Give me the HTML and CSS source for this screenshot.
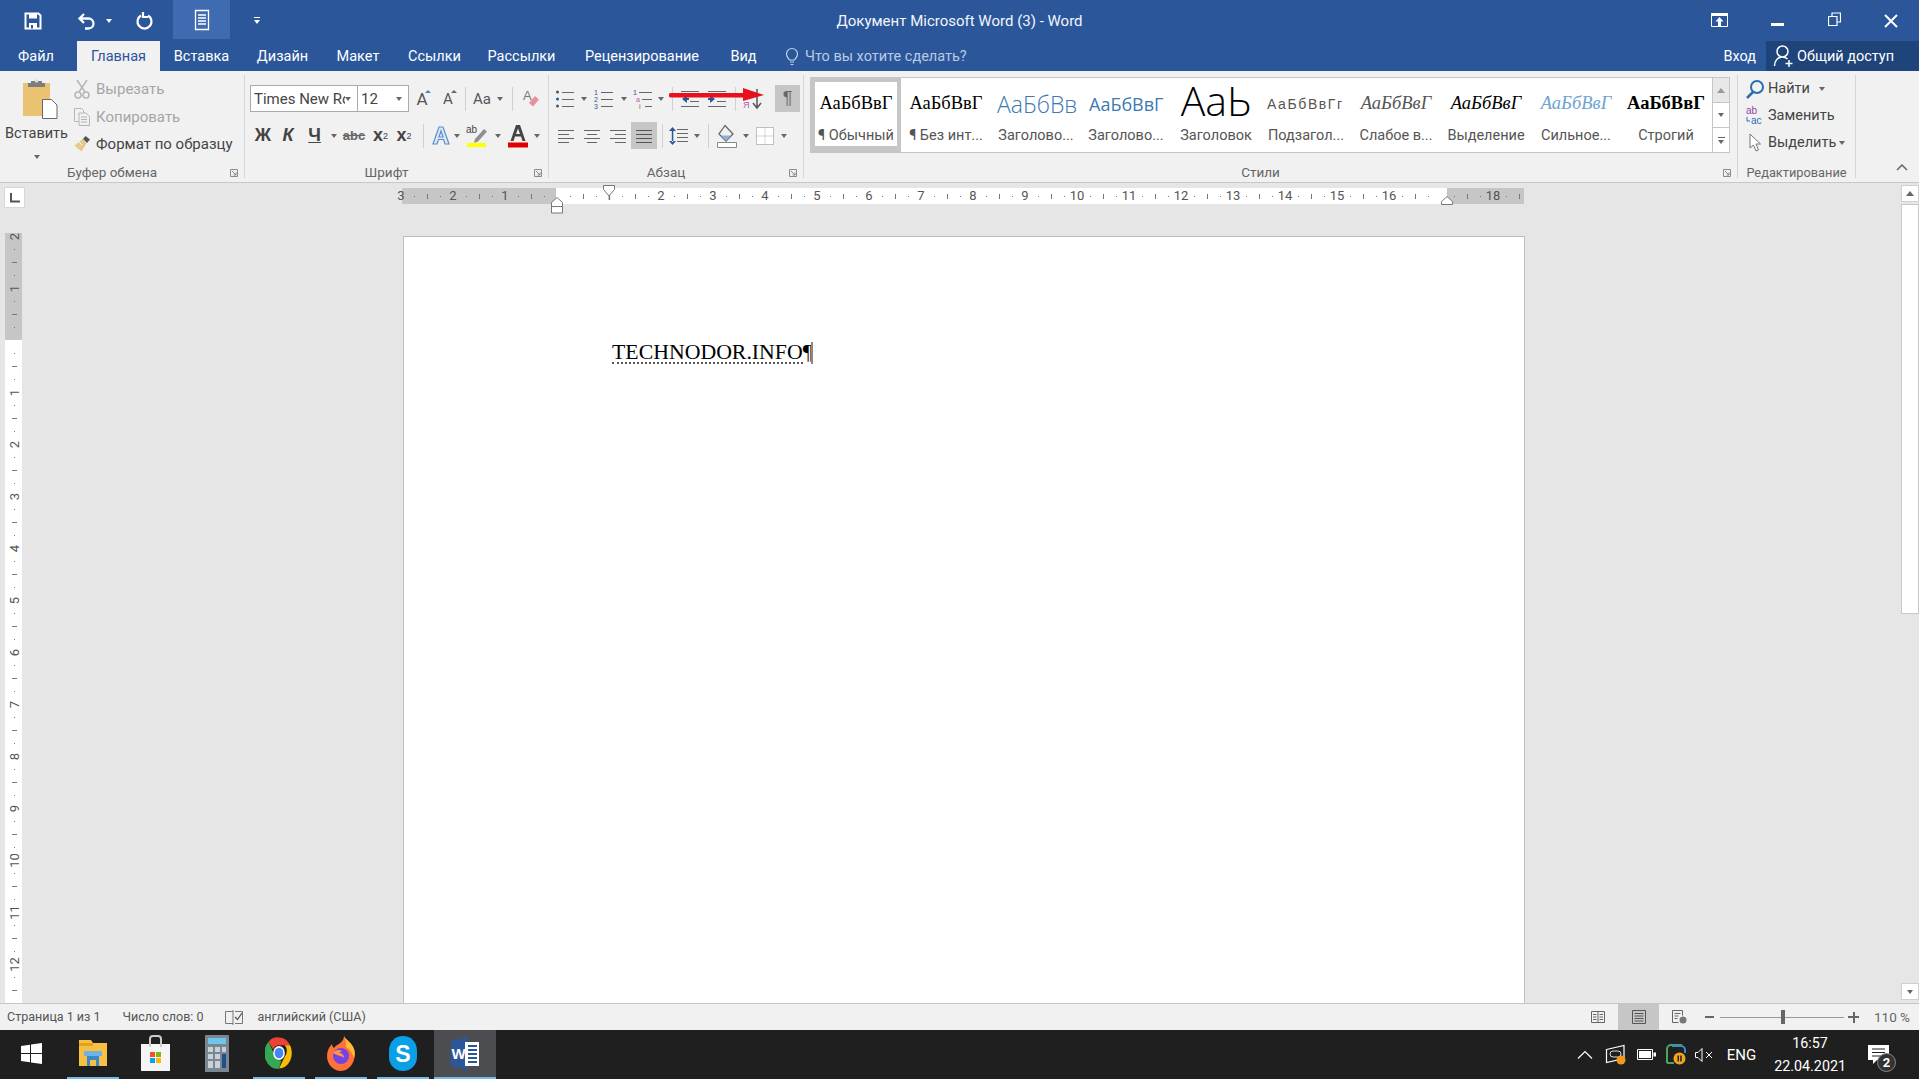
FILE: index.html
```html
<!DOCTYPE html>
<html lang="ru">
<head>
<meta charset="utf-8">
<title>Документ Microsoft Word (3) - Word</title>
<link rel="stylesheet" href="styles.css">
</head>
<body>
<div class="app">
  <header class="titlebar">
    <div class="qat">
      <svg class="qat-save" width="20" height="20" viewBox="0 0 20 20"><path d="M2.500 2.500h13l2 2v13h-15z" fill="none" stroke="#fff" stroke-width="2"/><path d="M6 2.500h8v5H6zM6 12h8v5.500H6z" fill="#fff"/><path d="M8 14h2v3.500H8z" fill="#2b579a"/></svg>
      <svg class="qat-undo" width="20" height="20" viewBox="0 0 20 20"><path d="M7 3L2.500 7.500 7 12M3 7.500h8.500a4.500 4.500 0 0 1 0 10H8" fill="none" stroke="#fff" stroke-width="2.300"/></svg>
      <i class="caret caret-w qat-caret"></i>
      <svg class="qat-redo" width="20" height="20" viewBox="0 0 20 20"><path d="M7 4.500A7 7 0 1 0 14 4.500M9 1v5H14" fill="none" stroke="#fff" stroke-width="2.200"/></svg>
      <div class="qat-active"><svg width="16" height="22" viewBox="0 0 16 22"><path d="M1.500 1.500h13v19h-13zM4 6h8M4 9h8M4 12h8M4 15h8" fill="none" stroke="#fff" stroke-width="1.300"/></svg></div>
      <svg class="qat-more" width="8" height="10" viewBox="0 0 8 10"><path d="M1 1h6v1H1zM1 4h6L4 8z" fill="#fff"/></svg>
    </div>
    <div class="doc-title">Документ Microsoft Word (3) - Word</div>
    <div class="winctl">
      <svg class="wc-ribbon" width="18" height="15" viewBox="0 0 18 15"><path d="M.500.500h16v13H.5z" fill="none" stroke="#fff"/><path d="M0 0h17v3H0zM8.500 4l4 4.500H10V13H7V8.500H4.500z" fill="#fff"/></svg>
      <svg class="wc-min" width="13" height="4" viewBox="0 0 13 4"><path d="M0 0h13v3H0z" fill="#fff"/></svg>
      <svg class="wc-max" width="13" height="15" viewBox="0 0 13 15"><path d="M.500 4.500h8.500v9H.500zM4 4V1h8.500v9H9.500" fill="none" stroke="#fff" stroke-width="1.200"/></svg>
      <svg class="wc-close" width="14" height="14" viewBox="0 0 14 14"><path d="M1 1l12 12M13 1L1 13" stroke="#fff" stroke-width="2"/></svg>
    </div>
  </header>

  <nav class="tabs">
    <a class="tab tab-file">Файл</a>
    <a class="tab tab-on">Главная</a>
    <a class="tab">Вставка</a>
    <a class="tab">Дизайн</a>
    <a class="tab">Макет</a>
    <a class="tab">Ссылки</a>
    <a class="tab">Рассылки</a>
    <a class="tab">Рецензирование</a>
    <a class="tab">Вид</a>
    <div class="tellme">
      <svg width="14" height="19" viewBox="0 0 14 19"><path d="M4.500 13C3 11 1.500 9.500 1.500 7a5.500 5.500 0 0 1 11 0c0 2.500-1.500 4-3 6zM5 15h4M5.500 17.500h3" fill="none" stroke="#c4d3e8" stroke-width="1.200"/></svg>
      <span>Что вы хотите сделать?</span>
    </div>
    <a class="signin">Вход</a>
    <a class="share">
      <svg width="22" height="24" viewBox="0 0 22 24"><path d="M9.500 2a5 5 0 0 1 0 11 5 5 0 0 1 0-11zM1.500 22c0-5 3-9 8-9 2 0 3.500.500 5 2M16 16v7M12.500 19.500h7" fill="none" stroke="#fff" stroke-width="1.500"/></svg>
      <span>Общий доступ</span>
    </a>
  </nav>

  <section class="ribbon">
    <div class="group g-clip">
      <div class="group-body clip-body">
        <div class="paste">
          <svg width="36" height="40" viewBox="0 0 36 40"><path d="M1 4h27v33H1z" fill="#e9c372"/><path d="M9 2h11v2h3v4H6V4h3z" fill="#7d7d7d"/><path d="M13 .500h3v3h-3z" fill="#dcdcdc"/><path d="M20.500 20.500h9l5.500 5.500v13.500H20.500z" fill="#fff" stroke="#666"/></svg>
          <span>Вставить</span>
          <i class="caret paste-caret"></i>
        </div>
        <div class="clip-cmds">
          <div class="cmd off"><svg width="18" height="20" viewBox="0 0 18 20"><path d="M4 1l8 12M14 1L6 13" stroke="#b5b5b5" stroke-width="1.500"/><circle cx="5" cy="16" r="3" fill="none" stroke="#b5b5b5" stroke-width="1.500"/><circle cx="13" cy="16" r="3" fill="none" stroke="#b5b5b5" stroke-width="1.500"/></svg><span>Вырезать</span></div>
          <div class="cmd off"><svg width="18" height="20" viewBox="0 0 18 20"><path d="M1.500 1.500h7l2 2v2M1.500 1.500v13h4M6 6h7l3.500 3.500v9H6zM8 10h6M8 12.500h6M8 15h6" fill="none" stroke="#b5b5b5"/></svg><span>Копировать</span></div>
          <div class="cmd"><svg width="18" height="18" viewBox="0 0 18 18"><path d="M12.500 1l4.500 3.500-3 3.500-4-4z" fill="#555"/><path d="M9.500 4l4 4.500-5 8-7-6z" fill="#e6c98a"/><path d="M6 7l3 3" stroke="#fff"/></svg><span>Формат по образцу</span></div>
        </div>
      </div>
      <div class="group-label">Буфер обмена</div>
      <svg class="launcher" width="8" height="8" viewBox="0 0 8 8"><path d="M.500.500h7v7h-7zM2 2l4 4M6 3.500V6H3.500" fill="none" stroke="#8a8a8a"/></svg>
    </div>

    <div class="group g-font">
      <div class="group-body rows">
        <div class="row font-r1">
          <div class="combo font-name"><span>Times New Ro</span><i class="caret"></i></div>
          <div class="combo font-size"><span>12</span><i class="caret"></i></div>
          <div class="cell"><b class="glyph-a">A</b><i class="up up-blue"></i></div>
          <div class="cell"><b class="glyph-a glyph-a-s">A</b><i class="up"></i></div>
          <div class="cell"><i class="vsep"></i></div>
          <div class="cell glyph-aa">Aa</div>
          <div class="cell"><i class="caret"></i></div>
          <div class="cell"><i class="vsep"></i></div>
          <div class="cell"><svg width="18" height="22" viewBox="0 0 18 22"><text x="1" y="12" class="svgt" font-size="13" fill="#777">A</text><path d="M7 15l6-7 4 3.500-6 7z" fill="#ea8f9c"/></svg></div>
        </div>
        <div class="row font-r2">
          <div class="cell fmt fmt-b">Ж</div>
          <div class="cell fmt fmt-i">К</div>
          <div class="cell fmt fmt-u">Ч</div>
          <div class="cell"><i class="caret"></i></div>
          <div class="cell fmt-s">abc</div>
          <div class="cell fmt-x">x<sub>2</sub></div>
          <div class="cell fmt-x">x<sup>2</sup></div>
          <div class="cell"><i class="vsep"></i></div>
          <div class="cell"><svg width="20" height="22" viewBox="0 0 20 22"><path d="M8 2h4l6 17h-4l-1.500-4.500h-5L6 19H2zM10 6l-2 6h4z" fill="#dbe8f6" fill-rule="evenodd" stroke="#5b8fc9" stroke-width="1.200"/></svg></div>
          <div class="cell"><i class="caret"></i></div>
          <div class="cell"><svg width="22" height="24" viewBox="0 0 22 24"><text x="0" y="9" class="svgt" font-size="10" fill="#444">ab</text><path d="M9 15l9-10 3 2.500-9 10-4 1.500z" fill="#8f8f8f"/><path d="M1 19h19v4H1z" fill="#ffff00"/></svg></div>
          <div class="cell"><i class="caret"></i></div>
          <div class="cell"><svg width="20" height="24" viewBox="0 0 20 24"><path d="M8 1h4l5.500 16h-3L13 12.500H7L5.500 17h-3zM10 4.500L8 10h4z" fill="#444" fill-rule="evenodd"/><path d="M0 18.500h20v5H0z" fill="#e00000"/></svg></div>
          <div class="cell"><i class="caret"></i></div>
        </div>
      </div>
      <div class="group-label">Шрифт</div>
      <svg class="launcher" width="8" height="8" viewBox="0 0 8 8"><path d="M.500.500h7v7h-7zM2 2l4 4M6 3.500V6H3.500" fill="none" stroke="#8a8a8a"/></svg>
    </div>

    <div class="group g-para">
      <div class="group-body rows">
        <div class="row para-r1">
          <div class="cell"><svg width="20" height="20" viewBox="0 0 20 20"><circle cx="2.500" cy="3" r="1.500" fill="#555"/><circle cx="2.500" cy="10" r="1.500" fill="#2b579a"/><circle cx="2.500" cy="17" r="1.500" fill="#555"/><path d="M7 3.500h12M7 10.500h12M7 17.500h12" stroke="#666"/></svg></div>
          <div class="cell"><i class="caret"></i></div>
          <div class="cell"><svg width="20" height="20" viewBox="0 0 20 20"><text x="0" y="6" class="svgt" font-size="7" fill="#2b579a">1</text><text x="0" y="13" class="svgt" font-size="7" fill="#2b579a">2</text><text x="0" y="20" class="svgt" font-size="7" fill="#2b579a">3</text><path d="M7 3.500h12M7 10.500h12M7 17.500h12" stroke="#666"/></svg></div>
          <div class="cell"><i class="caret"></i></div>
          <div class="cell"><svg width="20" height="20" viewBox="0 0 20 20"><text x="0" y="6" class="svgt" font-size="7" fill="#2b579a">1</text><text x="3" y="13" class="svgt" font-size="7" fill="#b15aa8">a</text><text x="6" y="20" class="svgt" font-size="7" fill="#666">i</text><path d="M6 3.500h13M9 10.500h10M12 17.500h7" stroke="#666"/></svg></div>
          <div class="cell"><i class="caret"></i></div>
          <div class="cell"><i class="vsep"></i></div>
          <div class="cell"><svg width="20" height="20" viewBox="0 0 20 20"><path d="M1 2.500h18M10 7.500h9M10 12.500h9M1 17.500h18" stroke="#666"/><path d="M7 6L2 10l5 4zM7 9h2v2H7z" fill="#2b579a"/></svg></div>
          <div class="cell"><svg width="20" height="20" viewBox="0 0 20 20"><path d="M1 2.500h18M10 7.500h9M10 12.500h9M1 17.500h18" stroke="#666"/><path d="M3 6l5 4-5 4zM1 9h2v2H1z" fill="#2b579a"/></svg></div>
          <div class="cell"><i class="vsep"></i></div>
          <div class="cell"><svg width="20" height="22" viewBox="0 0 20 22"><text x="0" y="9" class="svgt" font-size="9" fill="#2b579a">А</text><text x="0" y="20" class="svgt" font-size="9" fill="#b15aa8">Я</text><path d="M14 1v18M10 15l4 5 4-5" fill="none" stroke="#555" stroke-width="1.500"/></svg></div>
          <div></div>
          <div class="cell toggled pilcrow">¶</div>
        </div>
        <div class="row para-r2">
          <div class="cell"><svg width="18" height="16" viewBox="0 0 18 16"><path d="M1 2.500h16M1 6.500h11M1 10.500h16M1 14.500h11" stroke="#666"/></svg></div>
          <div class="cell"><svg width="18" height="16" viewBox="0 0 18 16"><path d="M1 2.500h16M4 6.500h10M1 10.500h16M4 14.500h10" stroke="#666"/></svg></div>
          <div class="cell"><svg width="18" height="16" viewBox="0 0 18 16"><path d="M1 2.500h16M6 6.500h11M1 10.500h16M6 14.500h11" stroke="#666"/></svg></div>
          <div class="cell toggled"><svg width="18" height="16" viewBox="0 0 18 16"><path d="M1 2.500h16M1 6.500h16M1 10.500h16M1 14.500h16" stroke="#555"/></svg></div>
          <div class="cell"><i class="vsep"></i></div>
          <div class="cell"><svg width="20" height="20" viewBox="0 0 20 20"><path d="M8 3.500h11M8 7.500h11M8 11.500h11M8 15.500h11" stroke="#666"/><path d="M3.500 1L7 5H0zM3.500 19L7 15H0zM2.800 4h1.500v12H2.800z" fill="#2b579a"/></svg></div>
          <div class="cell"><i class="caret"></i></div>
          <div class="cell"><i class="vsep"></i></div>
          <div class="cell"><svg width="22" height="24" viewBox="0 0 22 24"><path d="M9 1.500L3 10l7 7 7-7z" fill="#f1f1f1" stroke="#666" stroke-width="1.300"/><path d="M5 11.500h10L10 17z" fill="#8ab4e0"/><path d="M1.500 18.500h19v5h-19z" fill="#fff" stroke="#888"/></svg></div>
          <div class="cell"><i class="caret"></i></div>
          <div class="cell"><svg width="18" height="18" viewBox="0 0 18 18"><path d="M.500.500h17v17H.500z" fill="#fff" stroke="#888" stroke-dasharray="1 1"/><path d="M9 .500v17M.500 9h17" stroke="#aaa" stroke-dasharray="1 1"/></svg></div>
          <div class="cell"><i class="caret"></i></div>
        </div>
      </div>
      <div class="group-label">Абзац</div>
      <svg class="launcher" width="8" height="8" viewBox="0 0 8 8"><path d="M.500.500h7v7h-7zM2 2l4 4M6 3.500V6H3.500" fill="none" stroke="#8a8a8a"/></svg>
      <svg class="red-arrow" width="96" height="14" viewBox="0 0 96 14"><path d="M2 5h72V0l21 7-21 6V9.500H2a2.200 2.200 0 0 1 0-4.500z" fill="#e8101c"/></svg>
    </div>

    <div class="group g-styles">
      <div class="group-body">
        <div class="gallery">
          <div class="style-list">
            <div class="style style-on"><div class="pv pv-serif">АаБбВвГ</div><div class="lb">¶ Обычный</div></div>
            <div class="style"><div class="pv pv-serif">АаБбВвГ</div><div class="lb">¶ Без инт...</div></div>
            <div class="style"><div class="pv pv-h1">АаБбВв</div><div class="lb">Заголово...</div></div>
            <div class="style"><div class="pv pv-h2">АаБбВвГ</div><div class="lb">Заголово...</div></div>
            <div class="style"><div class="pv pv-title">АаЬ</div><div class="lb">Заголовок</div></div>
            <div class="style"><div class="pv pv-sub">АаБбВвГг</div><div class="lb">Подзагол...</div></div>
            <div class="style"><div class="pv pv-serif pv-it pv-gray">АаБбВвГ</div><div class="lb">Слабое в...</div></div>
            <div class="style"><div class="pv pv-serif pv-it">АаБбВвГ</div><div class="lb">Выделение</div></div>
            <div class="style"><div class="pv pv-serif pv-it pv-blue">АаБбВвГ</div><div class="lb">Сильное...</div></div>
            <div class="style"><div class="pv pv-serif pv-b">АаБбВвГ</div><div class="lb">Строгий</div></div>
          </div>
          <div class="gal-btns">
            <div class="gal-btn gal-off"><i class="up-s"></i></div>
            <div class="gal-btn"><i class="caret"></i></div>
            <div class="gal-btn gal-more"><i class="bar"></i><i class="caret"></i></div>
          </div>
        </div>
      </div>
      <div class="group-label">Стили</div>
      <svg class="launcher" width="8" height="8" viewBox="0 0 8 8"><path d="M.500.500h7v7h-7zM2 2l4 4M6 3.500V6H3.500" fill="none" stroke="#8a8a8a"/></svg>
    </div>

    <div class="group g-edit">
      <div class="group-body edit-body">
        <div class="cmd"><svg width="20" height="20" viewBox="0 0 20 20"><circle cx="12" cy="8" r="6" fill="none" stroke="#2b6cb0" stroke-width="2"/><path d="M8 13l-6 6" stroke="#2b6cb0" stroke-width="2.500"/></svg><span>Найти</span><i class="caret"></i></div>
        <div class="cmd"><svg width="20" height="20" viewBox="0 0 20 20"><text x="1" y="8" class="svgt" font-size="10" fill="#8e4aa0">ab</text><text x="6" y="18" class="svgt" font-size="10" fill="#2b6cb0">ac</text><path d="M2 11v4h3" fill="none" stroke="#2b6cb0"/></svg><span>Заменить</span></div>
        <div class="cmd"><svg width="20" height="20" viewBox="0 0 20 20"><path d="M5 1v14l3.500-3 2.500 6 2.500-1-2.500-6h4.500z" fill="#fff" stroke="#777"/></svg><span>Выделить</span><i class="caret"></i></div>
      </div>
      <div class="group-label group-label-c">Редактирование</div>
    </div>
    <div class="collapse"><svg width="12" height="7" viewBox="0 0 12 7"><path d="M1 6l5-5 5 5" fill="none" stroke="#666" stroke-width="1.500"/></svg></div>
  </section>

  <main class="main">
    <div class="work">
      <div class="hruler-row">
        <div class="tabstop"><svg width="10" height="10" viewBox="0 0 10 10"><path d="M1 0v8.500h9" fill="none" stroke="#555" stroke-width="2"/></svg></div>
        <div class="hruler">
          <div class="hcells">
            <span>3</span><span>2</span><span>1</span><span></span><span>1</span><span>2</span><span>3</span><span>4</span><span>5</span><span>6</span><span>7</span><span>8</span><span>9</span><span>10</span><span>11</span><span>12</span><span>13</span><span>14</span><span>15</span><span>16</span><span></span><span>18</span><span></span>
          </div>
          <svg class="m-first" width="14" height="13" viewBox="0 0 14 13"><path d="M1.500.500h11v4L7 11 1.500 4.500z" fill="#fff" stroke="#777"/></svg>
          <svg class="m-left" width="12" height="17" viewBox="0 0 12 17"><path d="M6 .500l5.500 5v10.500H.500V5.500zM.500 9.500h11" fill="#fff" stroke="#777"/></svg>
          <svg class="m-right" width="12" height="9" viewBox="0 0 12 9"><path d="M6 .500l5.500 5v3H.500v-3z" fill="#fff" stroke="#777"/></svg>
        </div>
      </div>
      <div class="doc-row">
        <div class="vruler">
          <div class="vcells">
            <span><b>2</b></span><span><b>1</b></span><span></span><span><b>1</b></span><span><b>2</b></span><span><b>3</b></span><span><b>4</b></span><span><b>5</b></span><span><b>6</b></span><span><b>7</b></span><span><b>8</b></span><span><b>9</b></span><span><b>10</b></span><span><b>11</b></span><span><b>12</b></span><span></span>
          </div>
        </div>
        <article class="page">
          <p class="para"><span class="spell">TECHNODOR.INFO</span><span class="pil">¶</span><i class="cursor"></i></p>
        </article>
      </div>
    </div>
    <aside class="scroll">
      <div class="sc-btn"><i class="up-s"></i></div>
      <div class="sc-thumb"></div>
      <div class="sc-space"></div>
      <div class="sc-btn"><i class="caret"></i></div>
    </aside>
  </main>

  <footer class="status">
    <span class="st-a">Страница 1 из 1</span>
    <span class="st-b">Число слов: 0</span>
    <svg class="st-c" width="18" height="17" viewBox="0 0 18 17"><path d="M8 2.500H.500v12H8M8 1v15M10 2.500h7.500v12H10" fill="none" stroke="#777"/><path d="M10 8l2.500 2.500L17 4" fill="none" stroke="#555" stroke-width="1.200"/></svg>
    <span class="st-d">английский (США)</span>
    <div class="views">
      <div class="view"><svg width="14" height="14" viewBox="0 0 14 14"><path d="M.500 1.500h13v11h-13zM7 1.500v11M2 4.500h3.500M2 7h3.500M2 9.500h3.500M8.500 4.500H12M8.500 7H12M8.500 9.500H12" fill="none" stroke="#666"/></svg></div>
      <div class="view view-on"><svg width="14" height="14" viewBox="0 0 14 14"><path d="M.500.500h13v13h-13zM2.500 3.500h9M2.500 6h9M2.500 8.500h9M2.500 11h9" fill="none" stroke="#555"/></svg></div>
      <div class="view"><svg width="15" height="14" viewBox="0 0 15 14"><path d="M.500.500h10v5M.500.500v12h6M2.500 3.500h6M2.500 6h4M2.500 8.500h3" fill="none" stroke="#666"/><circle cx="11" cy="10" r="3.500" fill="#777"/></svg></div>
    </div>
    <div class="zoom">
      <i class="z-minus"></i>
      <div class="z-track"><i class="z-thumb"></i></div>
      <i class="z-plus"></i>
      <span>110 %</span>
    </div>
  </footer>

  <div class="taskbar">
    <div class="task"><svg width="21" height="21" viewBox="0 0 21 21"><path d="M0 3l9-1.300V10H0zM10 1.500L21 0v10H10zM0 11h9v8.300L0 18zM10 11h11v10l-11-1.500z" fill="#fff"/></svg></div>
    <div class="task run"><svg width="28" height="28" viewBox="0 0 28 28"><path d="M0 1h12l2 3h14v23H0z" fill="#f6c143"/><path d="M0 4h14v3H0z" fill="#e3a21a" /><path d="M8 27V17h12v10h-3v-6h-6v6z" fill="#3a88c8"/><path d="M5 12h18v5H5z" fill="#6fb3e6"/></svg></div>
    <div class="task"><svg width="29" height="36" viewBox="0 0 29 36"><path d="M0 9h29v27H0z" fill="#f5f5f5"/><path d="M9 12V4a3 3 0 0 1 3-3h5a3 3 0 0 1 3 3v8" fill="none" stroke="#ccc" stroke-width="2"/><path d="M9 17h5v5H9z" fill="#f25022"/><path d="M15 17h5v5h-5z" fill="#7fba00"/><path d="M9 23h5v5H9z" fill="#00a4ef"/><path d="M15 23h5v5h-5z" fill="#ffb900"/></svg></div>
    <div class="task"><svg width="24" height="37" viewBox="0 0 24 37"><path d="M0 1a1 1 0 0 1 1-1h22a1 1 0 0 1 1 1v36H0z" fill="#7a8792"/><path d="M3 3h18v6H3z" fill="#6ec6ea"/><path d="M3 12h5v5H3zM10 12h5v5h-5zM17 12h4v5h-4zM3 19h5v5H3zM10 19h5v5h-5zM3 26h5v7H3zM10 26h5v7h-5z" fill="#c9d1d8"/><path d="M17 19h4v14h-4z" fill="#1e4f85"/></svg></div>
    <div class="task run"><svg width="28" height="34" viewBox="0 0 48 48" preserveAspectRatio="none"><path d="M24 2a22 22 0 0 1 19 11H24a11 11 0 0 0-10 6L6 8A22 22 0 0 1 24 2z" fill="#ea4335"/><path d="M43 13a22 22 0 0 1-19 33l10-17a11 11 0 0 0 0-16z" fill="#fbbc05"/><path d="M24 46A22 22 0 0 1 6 8l9 16a11 11 0 0 0 13 10.500z" fill="#34a853"/><circle cx="24" cy="24" r="10" fill="#fff"/><circle cx="24" cy="24" r="7.500" fill="#4285f4"/></svg></div>
    <div class="task run"><svg width="28" height="35" viewBox="0 0 28 35"><path d="M17 0c2 4 8 7 10 13 3 10-3 22-13 22C6 35 0 28 0 20c0-5 2-9 5-12 0 2 1 3 2 4 1-2 3-3 5-4 3-2 5-5 5-8z" fill="#ff7139"/><path d="M17 0c2 4 8 7 10 13 1 3 1 6 0 9-2-6-5-9-8-11 0-4 0-7-2-11z" fill="#ffbd30"/><circle cx="14" cy="20" r="8" fill="#7542e5"/><path d="M6 17c2-3 6-4 9-2l-3 2c3 0 5 2 5 5-2-2-6-2-11-5z" fill="#ff9640"/></svg></div>
    <div class="task run"><svg width="28" height="35" viewBox="0 0 28 35"><path d="M14 0c8 0 14 6 14 15v6c0 8-6 14-14 14S0 29 0 21v-6C0 6 6 0 14 0z" fill="#0a9fe6"/><text x="14" y="26" text-anchor="middle" class="svgt svgb" font-size="23" fill="#fff">S</text></svg></div>
    <div class="task run task-on"><svg width="28" height="33" viewBox="0 0 28 33"><path d="M0 4l17-4v33L0 29z" fill="#2b579a"/><path d="M14 5h14v24H14z" fill="#fff"/><path d="M17 9h9M17 13h9M17 17h9M17 21h9M17 25h9" stroke="#2b579a" stroke-width="2"/><text x="7.500" y="22" text-anchor="middle" class="svgt svgb" font-size="15" fill="#fff">W</text></svg></div>
    <div class="tray">
      <svg class="tr-up" width="16" height="9" viewBox="0 0 16 9"><path d="M1 8.500l7-7 7 7" fill="none" stroke="#fff" stroke-width="1.200"/></svg>
      <svg class="tr-sync" width="22" height="21" viewBox="0 0 22 21"><path d="M1.500 5.500L19 1.500v13l-17.500 4z" fill="none" stroke="#fff" stroke-width="1.200"/><path d="M8 7h5M8 13h5a3 3 0 0 0 0-6M8 7a3 3 0 0 0 0 6" fill="none" stroke="#ddd"/><circle cx="16" cy="16" r="4.500" fill="#f39a1e"/></svg>
      <svg class="tr-bat" width="19" height="11" viewBox="0 0 19 11"><path d="M.500.500h15v10h-15z" fill="none" stroke="#fff"/><path d="M2 2h12v7H2zM16.500 3.500H19v4h-2.500z" fill="#fff"/></svg>
      <svg class="tr-wifi" width="20" height="21" viewBox="0 0 20 21"><path d="M1 19V5a4 4 0 0 1 4-4h11" fill="none" stroke="#4aa564" stroke-width="2"/><path d="M1 19h7" stroke="#4aa564" stroke-width="2"/><path d="M6 2h9a4 4 0 0 1 4 4v3" fill="none" stroke="#3b8bc9" stroke-width="2"/><circle cx="13.500" cy="14.500" r="6" fill="#f2a61d"/><path d="M11.500 11.500h1.500v6h-1.500zM14.200 11.500h1.500v6h-1.500z" fill="#222"/></svg>
      <svg class="tr-snd" width="19" height="14" viewBox="0 0 19 14"><path d="M.500 4.500h2.500L7 .500v13L3 9.500H.500z" fill="none" stroke="#fff"/><path d="M11 4l6 6M17 4l-6 6" stroke="#fff"/></svg>
      <span class="tr-lang">ENG</span>
      <div class="tr-clock"><span>16:57</span><span>22.04.2021</span></div>
      <div class="tr-note">
        <svg width="21" height="19" viewBox="0 0 21 19"><path d="M0 0h21v15H9l-4 4v-4H0z" fill="#fff"/><path d="M4 4h13M4 7.500h13M4 11h9" stroke="#222"/></svg>
        <b>2</b>
      </div>
    </div>
  </div>
</div>
</body>
</html>
```

FILE: styles.css
```css
* { box-sizing: border-box; }
html, body { margin: 0; height: 100%; overflow: hidden; }
body { font-family: Roboto, "Noto Sans", sans-serif; font-size: 14.500px; color: #444; }
svg { display: block; flex: none; }
i { font-style: normal; display: block; }
.svgt { font-family: "Liberation Sans", sans-serif; }
.svgb { font-weight: 700; }

.app { width: 1919px; height: 1079px; display: flex; flex-direction: column; background: #e6e6e6; }

/* title bar */
.titlebar { height: 41px; flex: none; background: #2b579a; color: #fff; display: grid; grid-template-columns: 1fr auto 1fr; align-items: center; }
.qat { display: flex; align-items: center; height: 41px; padding-left: 23px; }
.qat-undo { margin-left: 34px; }
.qat-caret { margin-left: 9px; }
.qat-redo { margin-left: 22px; }
.qat-active { width: 57px; height: 39px; margin: 0 0 2px 19px; background: #3f6cb0; display: flex; align-items: center; justify-content: center; }
.qat-more { margin-left: 23px; }
.doc-title { font-size: 15px; color: #f1f5fb; }
.winctl { display: flex; align-items: center; justify-content: flex-end; padding-right: 21px; }
.wc-min { margin-left: 42px; margin-top: 8px; }
.wc-max { margin-left: 44px; margin-top: -2px; }
.wc-close { margin-left: 43px; }

/* tabs */
.tabs { height: 30px; flex: none; background: #2b579a; display: grid; grid-template-columns: 77px 83px 83px 79px 72px 81px 93px 148px 55px 1fr auto 153px; align-items: stretch; }
.tab { color: #fff; display: flex; align-items: center; justify-content: center; white-space: nowrap; }
.tab-file { padding-right: 5px; }
.tab-on { background: #f1f1f1; color: #2b579a; }
.tellme { display: flex; align-items: center; gap: 6px; padding-left: 14px; color: #b9cbe4; }
.signin { color: #fff; display: flex; align-items: center; padding-right: 10px; }
.share { background: #1e4479; color: #fff; display: flex; align-items: center; gap: 2px; padding-left: 7px; white-space: nowrap; }

/* ribbon */
.ribbon { height: 112px; flex: none; background: #f1f1f1; border-bottom: 1px solid #c8c8c8; display: flex; padding-top: 4px; }
.group { flex: none; position: relative; display: flex; flex-direction: column; height: 103px; border-right: 1px solid #d5d5d5; }
.g-clip { width: 245px; }
.g-font { width: 304px; }
.g-para { width: 255px; }
.g-styles { width: 934px; }
.g-edit { width: 118px; }
.group-body { flex: 1; min-height: 0; }
.group-label { height: 20px; line-height: 19px; text-align: center; font-size: 13.500px; color: #666; padding: 5px 20px 0 0; white-space: nowrap; }
.group-label-c { padding-right: 0; font-size: 12.800px; }
.launcher { position: absolute; right: 6px; bottom: 1px; }
.collapse { width: 100%; display: flex; align-items: flex-end; justify-content: flex-end; padding: 0 11px 7px 0; height: 103px; }

.caret { width: 0; height: 0; border-left: 3.500px solid transparent; border-right: 3.500px solid transparent; border-top: 4px solid #666; }
.caret-w { border-top-color: #fff; }
.up-s { width: 0; height: 0; border-left: 4px solid transparent; border-right: 4px solid transparent; border-bottom: 5px solid #999; }

.clip-body { display: flex; }
.paste { width: 73px; display: flex; flex-direction: column; align-items: center; padding-top: 4px; }
.paste svg { margin-left: 6px; }
.paste span { margin-top: 6px; line-height: 18px; }
.paste-caret { margin-top: 12px; }
.clip-cmds { display: flex; flex-direction: column; }
.cmd { height: 28px; display: flex; align-items: center; gap: 5px; white-space: nowrap; color: #444; }
.clip-cmds .cmd { font-size: 15px; }
.cmd.off { color: #a6a6a6; }

.rows { display: flex; flex-direction: column; padding-top: 10px; gap: 10px; }
.row { display: grid; height: 27px; align-items: center; }
.cell { height: 27px; display: flex; align-items: center; justify-content: center; position: relative; }
.vsep { width: 1px; height: 24px; background: #d0d0d0; }
.toggled { background: #c6c6c6; }

.font-r1 { grid-template-columns: 108px 51px 26px 26px 8px 26px 10px 14px 24px; margin-left: 5px; }
.font-r2 { grid-template-columns: 24px 26px 27px 12px 28px 25px 22px 16px 20px 12px 28px 14px 26px 12px; margin-left: 6px; }
.combo { height: 27px; background: #fff; border: 1px solid #ababab; display: flex; align-items: center; justify-content: space-between; padding: 0 6px 0 3px; overflow: hidden; font-size: 15px; color: #444; }
.font-size { border-left: 0; }
.font-name span { width: 91px; overflow: hidden; white-space: nowrap; }
.glyph-a { font-weight: 400; font-size: 17px; color: #555; }
.glyph-a-s { font-size: 15px; }
.up { position: absolute; right: 4px; top: 5px; width: 0; height: 0; border-left: 3px solid transparent; border-right: 3px solid transparent; border-bottom: 3px solid #666; }
.up-blue { border-bottom-color: #4f81bd; }
.glyph-aa { color: #555; font-size: 15px; }
.fmt { font-family: "Liberation Sans", sans-serif; font-size: 18px; color: #444; font-weight: 700; }
.fmt-i { font-style: italic; }
.fmt-u { text-decoration: underline; }
.fmt-s { font-family: "Liberation Sans", sans-serif; font-size: 13px; font-weight: 700; color: #666; text-decoration: line-through; }
.fmt-x { font-family: "Liberation Sans", sans-serif; font-size: 18px; font-weight: 700; color: #444; }
.fmt-x sub, .fmt-x sup { font-size: 9px; font-weight: 400; }

.para-r1 { grid-template-columns: 24px 14px 26px 14px 24px 12px 10px 26px 28px 8px 28px 8px 25px; margin-left: 4px; }
.para-r2 { grid-template-columns: 26px 26px 26px 26px 10px 24px 12px 10px 28px 10px 28px 10px; margin-left: 4px; }
.pilcrow { font-family: "Liberation Sans", sans-serif; font-size: 18px; color: #666; }
.red-arrow { position: absolute; left: 120px; top: 13px; }

.gallery { height: 76px; margin: 2px 7px 0 6px; display: flex; background: #fff; border: 1px solid #c6c6c6; }
.style-list { flex: 1; display: flex; min-width: 0; overflow: hidden; }
.style { width: 90px; flex: none; height: 74px; display: flex; flex-direction: column; align-items: center; overflow: hidden; border: 4px solid transparent; border-bottom-width: 6px; }
.style-on { border-color: #c6c6c6; }
.pv { height: 43px; width: 82px; flex: none; overflow: hidden; white-space: nowrap; display: flex; align-items: center; justify-content: center; color: #000; font-family: "Liberation Sans", sans-serif; }
.pv-serif { font-family: "Liberation Serif", serif; font-size: 18.500px; }
.pv-it { font-style: italic; }
.pv-gray { color: #555; }
.pv-blue { color: #6ea3cf; }
.pv-b { font-weight: 700; }
.pv-h1 { font-size: 23px; font-weight: 300; color: #3c7ab0; font-family: "Open Sans", sans-serif; justify-content: flex-start; padding-left: 2px; }
.pv-h2 { font-size: 18px; color: #3c7ab0; font-family: "Open Sans", sans-serif; justify-content: flex-start; padding-left: 4px; }
.pv-title { font-size: 41px; line-height: 42px; color: #000; font-weight: 300; font-family: "Open Sans", sans-serif; overflow: visible; padding-bottom: 8px; }
.pv-sub { font-size: 14px; color: #555; letter-spacing: 1.600px; justify-content: flex-start; padding-left: 2px; }
.lb { font-size: 14.500px; line-height: 21px; white-space: nowrap; color: #555; position: relative; }
.gal-btns { width: 17px; display: flex; flex-direction: column; }
.gal-btn { flex: 1; display: flex; flex-direction: column; gap: 2px; align-items: center; justify-content: center; border-left: 1px solid #c6c6c6; border-bottom: 1px solid #c6c6c6; }
.gal-btn:last-child { border-bottom: 0; }
.gal-off { background: #e8e8e8; }
.bar { width: 7px; height: 1px; background: #666; }

.edit-body { padding-top: 0; padding-left: 7px; }
.edit-body .cmd { height: 27px; gap: 3px; }
.edit-body .caret { margin-left: 6px; }
.edit-body .cmd:last-child .caret { margin-left: 0; }

/* workspace */
.main { flex: 1; min-height: 0; display: flex; }
.work { flex: 1; min-width: 0; display: flex; flex-direction: column; overflow: hidden; }
.hruler-row { height: 50px; flex: none; display: flex; align-items: flex-start; padding: 4px 0 0 4px; }
.tabstop { width: 21px; height: 21px; background: #fff; border: 1px solid #d8d8d8; display: flex; align-items: center; justify-content: center; }
.hruler { margin: 1px 0 0 377px; width: 1122px; height: 16px; position: relative; background: linear-gradient(90deg, #c6c6c6 154px, #fff 154px, #fff 1045px, #c6c6c6 1045px); }
.hcells { display: flex; margin-left: -27px; height: 16px; clip-path: inset(0 0 0 19px); }
.hcells span { width: 52px; flex: none; text-align: center; line-height: 16px; font-size: 13px; color: #555;
  background:
    linear-gradient(#777 0 0) 13px 8px / 1px 1px no-repeat,
    linear-gradient(#777 0 0) 39px 8px / 1px 1px no-repeat,
    linear-gradient(#777 0 0) 0 6px / 1px 5px no-repeat; }
.m-first { position: absolute; left: 200px; top: -3px; }
.m-left { position: absolute; left: 149px; top: 9px; }
.m-right { position: absolute; left: 1039px; top: 8px; }

.doc-row { flex: 1; min-height: 0; display: flex; align-items: flex-start; padding-left: 5px; }
.vruler { width: 17px; height: 770px; overflow: hidden; background: linear-gradient(#c6c6c6 107px, #fff 107px); }
.vcells { display: flex; flex-direction: column; margin-top: -23px; }
.vcells span { height: 52px; flex: none; display: flex; align-items: center; justify-content: center; padding-left: 2px;
  background:
    linear-gradient(#777 0 0) 9px 13px / 1px 1px no-repeat,
    linear-gradient(#777 0 0) 9px 39px / 1px 1px no-repeat,
    linear-gradient(#777 0 0) 7px 0 / 5px 1px no-repeat; }
.vcells b { font-weight: 400; font-size: 13px; color: #555; transform: rotate(-90deg); white-space: nowrap; }
.page { margin: 3px 0 0 381px; width: 1122px; height: 800px; background: #fff; border: 1px solid #bdbdbd; border-bottom: 0; padding: 102px 0 0 208px; }
.para { margin: 0; display: flex; font-family: "Liberation Serif", serif; font-size: 21.800px; line-height: 26px; color: #000; }
.spell { border-bottom: 2px dotted #555; height: 25px; }
.pil { margin-left: 0; }
.cursor { width: 2px; height: 22px; background: #888; margin: 3px 0 0 -2px; }

/* scrollbar */
.scroll { width: 18px; flex: none; display: flex; flex-direction: column; padding: 2px 0 3px; }
.sc-btn { height: 17px; background: #fff; border: 1px solid #d0d0d0; display: flex; align-items: center; justify-content: center; flex: none; }
.sc-btn .up-s { border-bottom-color: #666; }
.sc-thumb { height: 410px; margin-top: 2px; background: #fff; border: 1px solid #c8c8c8; }
.sc-space { flex: 1; }

/* status */
.status { height: 27px; flex: none; background: #f1f1f1; border-top: 1px solid #c6c6c6; display: flex; align-items: center; font-size: 12.500px; color: #555; padding-left: 7px; }
.st-a, .st-b, .st-d { position: relative; top: -1px; }
.st-b { margin-left: 22px; }
.st-c { margin-left: 21px; }
.st-d { margin-left: 15px; }
.views { margin-left: auto; display: flex; align-self: stretch; margin-right: -2px; }
.view { width: 40px; display: flex; align-items: center; justify-content: center; }
.view-on { background: #c6c6c6; width: 41px; }
.zoom { display: flex; align-items: center; margin-left: 8px; padding-right: 9px; gap: 4px; }
.z-minus { width: 9px; height: 2px; background: #666; margin-right: 2px; }
.z-track { width: 124px; height: 1px; background: #999; position: relative; }
.z-thumb { position: absolute; left: 61px; top: -7px; width: 4px; height: 14px; background: #666; }
.z-plus { width: 11px; height: 11px; background: linear-gradient(#666 0 0) center / 11px 2px no-repeat, linear-gradient(#666 0 0) center / 2px 11px no-repeat; }
.zoom span { margin-left: 11px; color: #666; font-size: 13.500px; }

/* taskbar */
.taskbar { height: 49px; flex: none; background: #1f1f1f; display: flex; padding-left: 0; color: #fff; }
.task { width: 62px; display: flex; align-items: center; justify-content: center; position: relative; padding-bottom: 3px; }
.run::after { content: ""; position: absolute; left: 5px; right: 5px; bottom: 0; height: 2px; background: #76b9ed; }
.task-on { background: #4b4d50; }
.task-on::after { left: 0; right: 0; }
.tray { margin-left: auto; display: flex; align-items: center; padding-right: 30px; font-size: 15px; }
.tr-sync { margin-left: 12px; }
.tr-bat { margin-left: 10px; }
.tr-wifi { margin-left: 10px; }
.tr-snd { margin-left: 9px; }
.tr-lang { margin-left: 13px; }
.tr-clock { margin-left: 18px; display: flex; flex-direction: column; align-items: center; line-height: 23px; font-size: 14.300px; }
.tr-note { margin-left: 22px; position: relative; }
.tr-note b { position: absolute; left: 9px; top: 8px; width: 19px; height: 19px; border-radius: 50%; background: #333; border: 1px solid #888; font-size: 13px; line-height: 17px; text-align: center; }
```
